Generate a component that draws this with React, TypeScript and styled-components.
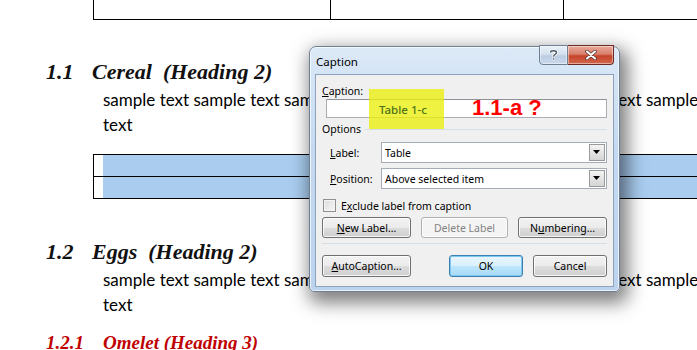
import React from "react";
import styled, { createGlobalStyle } from "styled-components";

const GlobalStyle = createGlobalStyle`
    html, body {
        margin: 0;
        padding: 0;
        background: #ffffff;
        overflow: hidden;
    }
`;

const Page = styled.div`
    position: relative;
    width: 697px;
    height: 350px;
    overflow: hidden;
    background: #ffffff;
`;

// ---- document ----

const TopTable = styled.div`
    display: grid;
    grid-template-columns: 237px 233px 1fr;
    margin-left: 93px;
    height: 19px;
    border-left: 1px solid #000;
    border-bottom: 1px solid #000;
`;

const TopCell = styled.div`
    border-right: 1px solid #000;
`;

const Heading = styled.h2<{ $top: number }>`
    display: flex;
    margin: ${({ $top }) => $top}px 0 0 46px;
    height: 28px;
    line-height: 28px;
    font-family: "Liberation Serif", "DejaVu Serif", serif;
    font-style: italic;
    font-weight: bold;
    font-size: 22px;
    color: #111;
    white-space: pre;
`;

const HeadNum = styled.span<{ $w: number }>`
    width: ${({ $w }) => $w}px;
    flex: none;
`;

const SubHeading = styled(Heading)`
    height: 24px;
    line-height: 24px;
    font-size: 19px;
    color: #c00000;
`;

const Para = styled.p<{ $top: number }>`
    margin: ${({ $top }) => $top}px 0 0 103px;
    font-family: Lato, "Liberation Sans", sans-serif;
    font-size: 17px;
    line-height: 25px;
    color: #000;
    white-space: nowrap;
`;

const SelTable = styled.div`
    margin: 17px 0 0 93px;
    border-left: 1px solid #000;
    border-bottom: 1px solid #000;
`;

const SelRow = styled.div`
    height: 21px;
    border-top: 1px solid #000;
    padding-left: 9px;
    display: flex;
`;

const SelFill = styled.div`
    flex: 1;
    background: #a9ccef;
`;

// ---- dialog ----

const Dialog = styled.div`
    position: absolute;
    left: 309px;
    top: 46px;
    width: 311px;
    height: 246px;
    box-sizing: border-box;
    border: 1px solid #6d7f96;
    border-radius: 7px 7px 5px 5px;
    background: linear-gradient(180deg, #dce9f7 0%, #c5daf1 40%, #bcd3ee 100%);
    box-shadow: 4px 7px 18px 4px rgba(0, 0, 0, 0.5), inset 0 0 0 1px rgba(255, 255, 255, 0.7);
    font-family: "Noto Sans", "Liberation Sans", sans-serif;
    font-size: 10.5px;
    color: #000;
    display: flex;
    flex-direction: column;
    padding: 0 5px 4px 5px;
`;

const TitleBar = styled.div`
    height: 27px;
    display: flex;
    align-items: flex-start;
`;

const Title = styled.span`
    flex: 1;
    padding: 7px 0 0 1px;
    font-size: 11.5px;
`;

const CaptionButtons = styled.div`
    display: flex;
    margin-top: -2px;
`;

const CapBtn = styled.div<{ $close?: boolean }>`
    width: ${({ $close }) => ($close ? 46 : 29)}px;
    height: 20px;
    box-sizing: border-box;
    border: 1px solid ${({ $close }) => ($close ? "#6b2a22" : "#6f7f94")};
    border-radius: ${({ $close }) => ($close ? "0 0 4px 0" : "0 0 0 4px")};
    border-left-width: ${({ $close }) => ($close ? 0 : 1)}px;
    background: ${({ $close }) =>
        $close
            ? "linear-gradient(180deg, #e8a99a 0%, #d9806c 45%, #c4442a 55%, #d2664c 100%)"
            : "linear-gradient(180deg, #e8f0f8 0%, #d4e1ef 45%, #bccde2 55%, #c9d9ec 100%)"};
    display: flex;
    align-items: center;
    justify-content: center;
    box-shadow: inset 0 0 0 1px rgba(255, 255, 255, 0.45);
`;

const Client = styled.div`
    flex: 1;
    background: #f0f0f0;
    border: 1px solid #8da2bd;
    padding: 0 6px 0 6px;
    display: flex;
    flex-direction: column;
`;

const FieldLabel = styled.div`
    height: 16px;
    line-height: 16px;
    margin: 8px 0 0 0;
`;

const InputWrap = styled.div`
    position: relative;
    margin: 0 0 0 4px;
    height: 19px;
`;

const TextBox = styled.div`
    height: 19px;
    box-sizing: border-box;
    border: 1px solid #abadb3;
    border-top-color: #8e9197;
    background: #fff;
`;

const Highlight = styled.div`
    position: absolute;
    left: 43px;
    top: -10px;
    width: 75px;
    height: 40px;
    background: rgba(234, 238, 10, 0.78);
    display: flex;
    align-items: center;
    padding-left: 10px;
    box-sizing: border-box;
    color: #4e731a;
    font-size: 11.5px;
    font-weight: 500;
`;

const Question = styled.span`
    position: absolute;
    left: 146px;
    top: -4px;
    font-family: "Liberation Sans", Arial, sans-serif;
    font-weight: bold;
    font-size: 22px;
    line-height: 26px;
    color: #ff0000;
`;

const GroupHead = styled.div`
    display: flex;
    align-items: center;
    gap: 4px;
    margin-top: 3px;
    height: 16px;
`;

const GroupLine = styled.div`
    flex: 1;
    height: 1px;
    background: #d5dfe5;
`;

const OptionRow = styled.div<{ $top: number }>`
    display: flex;
    align-items: center;
    margin: ${({ $top }) => $top}px 0 0 8px;
    height: 21px;
`;

const RowLabel = styled.span`
    width: 51px;
`;

const Select = styled.div`
    flex: 1;
    height: 21px;
    box-sizing: border-box;
    border: 1px solid #a5acb5;
    background: #fff;
    display: flex;
    align-items: center;
    padding-left: 3px;
`;

const SelectText = styled.span`
    flex: 1;
`;

const ArrowBtn = styled.div`
    width: 16px;
    height: 17px;
    margin-right: 1px;
    box-sizing: border-box;
    border: 1px solid #9a9a9a;
    background: linear-gradient(180deg, #f4f4f4 0%, #e4e4e4 50%, #d4d4d4 100%);
    display: flex;
    align-items: center;
    justify-content: center;
`;

const CheckRow = styled.div`
    display: flex;
    align-items: center;
    gap: 5px;
    margin: 10px 0 0 1px;
    height: 13px;
`;

const CheckBox = styled.div`
    width: 13px;
    height: 13px;
    box-sizing: border-box;
    border: 1px solid #8f8f8f;
    background: linear-gradient(135deg, #dcdcdc 0%, #f6f6f6 100%);
    box-shadow: inset 0 0 0 1px #f4f4f4;
`;

const ButtonRow = styled.div<{ $top: number; $h: number }>`
    display: flex;
    justify-content: space-between;
    gap: 10px;
    margin: ${({ $top }) => $top}px 0 0 0;
    height: ${({ $h }) => $h}px;
`;

const Btn = styled.div<{ $w: number; $disabled?: boolean; $default?: boolean }>`
    width: ${({ $w }) => $w}px;
    flex: none;
    box-sizing: border-box;
    border: 1px solid ${({ $disabled, $default }) => ($disabled ? "#adb2b5" : $default ? "#3c7fb1" : "#707070")};
    border-radius: 3px;
    background: ${({ $disabled, $default }) =>
        $disabled
            ? "#f4f4f4"
            : $default
            ? "linear-gradient(180deg, #eaf6fd 0%, #d9f0fc 50%, #bee6fd 51%, #a7d9f5 100%)"
            : "linear-gradient(180deg, #f2f2f2 0%, #ebebeb 50%, #dddddd 51%, #cfcfcf 100%)"};
    box-shadow: ${({ $default }) => ($default ? "inset 0 0 0 1px #7ec8f0" : "inset 0 0 0 1px rgba(255,255,255,0.8)")};
    color: ${({ $disabled }) => ($disabled ? "#838383" : "#000")};
    display: flex;
    align-items: center;
    justify-content: center;
    white-space: nowrap;
`;

const Spacer = styled.div`
    flex: 1;
`;

const Separator = styled.div`
    height: 1px;
    margin-top: 5px;
    background: #d5dfe5;
`;

function Arrow() {
    return (
        <svg width="8" height="5" viewBox="0 0 8 5">
            <path d="M0 0 H7 L3.5 4 Z" fill="#000" />
        </svg>
    );
}

const sample = "sample text sample text sample text sample text sample text sample text sample text";

export default function App() {
    return (
        <>
            <GlobalStyle />
            <Page>
                <TopTable>
                    <TopCell />
                    <TopCell />
                    <div />
                </TopTable>

                <Heading $top={38}>
                    <HeadNum $w={46}>1.1</HeadNum>
                    {"Cereal  (Heading 2)"}
                </Heading>
                <Para $top={1}>
                    {sample}
                    <br />
                    text
                </Para>

                <SelTable>
                    <SelRow>
                        <SelFill />
                    </SelRow>
                    <SelRow>
                        <SelFill />
                    </SelRow>
                </SelTable>

                <Heading $top={39}>
                    <HeadNum $w={46}>1.2</HeadNum>
                    {"Eggs  (Heading 2)"}
                </Heading>
                <Para $top={1}>
                    {sample}
                    <br />
                    text
                </Para>

                <SubHeading $top={14}>
                    <HeadNum $w={57}>1.2.1</HeadNum>
                    {"Omelet (Heading 3)"}
                </SubHeading>

                <Dialog>
                    <TitleBar>
                        <Title>Caption</Title>
                        <CaptionButtons>
                            <CapBtn>
                                <svg width="9" height="12" viewBox="0 0 9 12">
                                    <path
                                        d="M1.5 3.5 C1.5 1.2 7.5 1.2 7.5 3.5 C7.5 5.5 4.5 5.5 4.5 7.5"
                                        fill="none"
                                        stroke="#fff"
                                        strokeWidth="3"
                                    />
                                    <path
                                        d="M1.5 3.5 C1.5 1.2 7.5 1.2 7.5 3.5 C7.5 5.5 4.5 5.5 4.5 7.5"
                                        fill="none"
                                        stroke="#4b5563"
                                        strokeWidth="1.4"
                                    />
                                    <rect x="3.5" y="9" width="2" height="2" fill="#4b5563" stroke="#fff" strokeWidth="0.6" />
                                </svg>
                            </CapBtn>
                            <CapBtn $close>
                                <svg width="12" height="10" viewBox="0 0 12 10">
                                    <path d="M2 1.5 L10 8.5 M10 1.5 L2 8.5" stroke="#5a3a34" strokeWidth="3.6" strokeLinecap="round" />
                                    <path d="M2 1.5 L10 8.5 M10 1.5 L2 8.5" stroke="#ffffff" strokeWidth="2" strokeLinecap="round" />
                                </svg>
                            </CapBtn>
                        </CaptionButtons>
                    </TitleBar>

                    <Client>
                        <FieldLabel>
                            <u>C</u>aption:
                        </FieldLabel>
                        <InputWrap>
                            <TextBox />
                            <Highlight>Table 1-c</Highlight>
                            <Question>1.1-a ?</Question>
                        </InputWrap>

                        <GroupHead>
                            <span>Options</span>
                            <GroupLine />
                        </GroupHead>

                        <OptionRow $top={5}>
                            <RowLabel>
                                <u>L</u>abel:
                            </RowLabel>
                            <Select>
                                <SelectText>Table</SelectText>
                                <ArrowBtn>
                                    <Arrow />
                                </ArrowBtn>
                            </Select>
                        </OptionRow>
                        <OptionRow $top={5}>
                            <RowLabel>
                                <u>P</u>osition:
                            </RowLabel>
                            <Select>
                                <SelectText>Above selected item</SelectText>
                                <ArrowBtn>
                                    <Arrow />
                                </ArrowBtn>
                            </Select>
                        </OptionRow>

                        <CheckRow>
                            <CheckBox />
                            <span>
                                E<u>x</u>clude label from caption
                            </span>
                        </CheckRow>

                        <ButtonRow $top={5} $h={21}>
                            <Btn $w={89}>
                                <span>
                                    <u>N</u>ew Label…
                                </span>
                            </Btn>
                            <Btn $w={87} $disabled>
                                Delete Label
                            </Btn>
                            <Btn $w={89}>
                                <span>
                                    N<u>u</u>mbering…
                                </span>
                            </Btn>
                        </ButtonRow>

                        <Separator />

                        <ButtonRow $top={11} $h={22}>
                            <Btn $w={89}>
                                <span>
                                    <u>A</u>utoCaption…
                                </span>
                            </Btn>
                            <Spacer />
                            <Btn $w={74} $default>
                                OK
                            </Btn>
                            <Btn $w={74}>Cancel</Btn>
                        </ButtonRow>
                    </Client>
                </Dialog>
            </Page>
        </>
    );
}
